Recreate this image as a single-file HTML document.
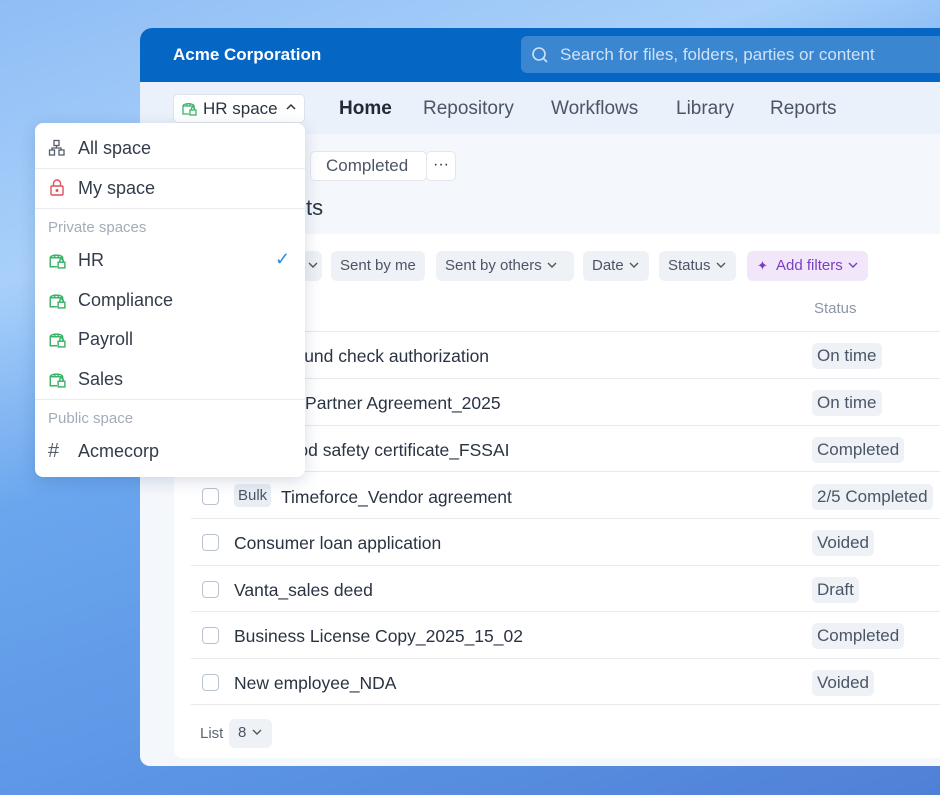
<!DOCTYPE html>
<html><head><meta charset="utf-8"><style>
*{box-sizing:border-box;margin:0;padding:0}
body{width:940px;height:795px;overflow:hidden;position:relative;font-family:"Liberation Sans",sans-serif;color:#2a3342;
background:linear-gradient(160deg,#8fbdf5 0%,#a9d0fa 25%,#6aa6ee 45%,#5e97e6 70%,#4f80d6 100%)}
.a{position:absolute}
.win{left:140px;top:28px;width:820px;height:738px;background:#f4f7fb;border-radius:12px 0 0 10px;overflow:hidden}
.hdr{left:0;top:0;width:100%;height:54px;background:#0566c4}
.title{left:33px;top:17px;color:#fff;font-weight:bold;font-size:17px}
.search{left:381px;top:8px;width:440px;height:37px;background:#3a86d0;border-radius:6px;color:#cfe2f6;font-size:17px;padding:9px 0 0 39px}
.nav{left:0;top:54px;width:100%;height:52px;background:#eaf1fa}
.nv{top:70px;font-size:19px;color:#4a5566}
.card{left:34px;top:206px;width:800px;height:524px;background:#fff;border-radius:8px}
.chip{height:30px;background:#eef1f5;border-radius:6px;font-size:15px;color:#4b5565;padding:6px 9px;top:223px}
.line{left:51px;width:760px;height:1px;background:#e6e9ee}
.row{left:94px;font-size:17.5px;color:#2a3342}
.cb{left:62px;width:17px;height:17px;border:1.5px solid #b9c3d0;border-radius:4px}
.st{left:672px;background:#eef1f5;border-radius:5px;font-size:17px;color:#4b5565;padding:3px 5px}
.dd{left:35px;top:123px;width:270px;height:354px;background:#fff;border-radius:8px;box-shadow:0 4px 16px rgba(30,60,110,.18)}
.di{left:43px;font-size:18px;color:#333c4a}
.ic{left:13px}
.sep{left:0;width:270px;height:1px;background:#e8ebef}
.lab{left:13px;font-size:15px;color:#a3acb8}
</style></head><body>
<div class="a win">
 <div class="a hdr"></div>
 <div class="a title">Acme Corporation</div>
 <div class="a search">Search for files, folders, parties or content</div>
 <svg class="a" style="left:391px;top:18px" width="18" height="18" viewBox="0 0 18 18"><circle cx="8" cy="8" r="6" fill="none" stroke="#cfe2f6" stroke-width="1.6"/><path d="M12.5 12.5L16 16" stroke="#cfe2f6" stroke-width="1.6"/></svg>
 <div class="a nav"></div>
 <div class="a" style="left:33px;top:66px;width:132px;height:29px;background:#fff;border:1px solid #dde3ea;border-radius:5px;font-size:17px;padding:4px 0 0 29px;color:#2a3342">HR space</div>
 <svg class="a" style="left:41px;top:72px" width="16" height="16" viewBox="0 0 16 16"><path d="M8 14H2V6h11v3M2 6c0-3 11-3 11 0M6 3v3M9 3v3" fill="none" stroke="#3bb46a" stroke-width="1.3"/><rect x="9" y="10" width="6" height="5" fill="none" stroke="#3bb46a" stroke-width="1.3"/><path d="M10.5 10V8.5a1.5 1.5 0 0 1 3 0V10" fill="none" stroke="#3bb46a" stroke-width="1.3"/></svg>
 <svg class="a" style="left:145px;top:74px" width="12" height="10"><path d="M2 7l4-4 4 4" fill="none" stroke="#333" stroke-width="1.5"/></svg>
 <div class="a nv" style="left:199px;font-weight:bold;color:#222a36">Home</div>
 <div class="a nv" style="left:283px">Repository</div>
 <div class="a nv" style="left:411px">Workflows</div>
 <div class="a nv" style="left:536px">Library</div>
 <div class="a nv" style="left:630px">Reports</div>
 <div class="a" style="left:170px;top:123px;width:117px;height:30px;background:#fff;border:1px solid #e3e7ed;border-radius:5px;font-size:17px;color:#4b5565;padding:4px 0 0 15px">Completed</div>
 <div class="a" style="left:286px;top:123px;width:30px;height:30px;background:#fff;border:1px solid #e3e7ed;border-radius:5px;font-size:16px;text-align:center;padding-top:4px;color:#333">···</div>
 <div class="a" style="left:166px;top:167px;font-size:22px;color:#2a3342">ts</div>
 <div class="a card"></div>
 <div class="a chip" style="left:140px;width:42px"><svg width="12" height="10" style="margin-left:18px"><path d="M2 3l4 4 4-4" fill="none" stroke="#555" stroke-width="1.4"/></svg></div>
 <div class="a chip" style="left:191px">Sent by me</div>
 <div class="a chip" style="left:296px;width:138px">Sent by others <svg width="12" height="10"><path d="M2 3l4 4 4-4" fill="none" stroke="#555" stroke-width="1.4"/></svg></div>
 <div class="a chip" style="left:443px">Date <svg width="12" height="10"><path d="M2 3l4 4 4-4" fill="none" stroke="#555" stroke-width="1.4"/></svg></div>
 <div class="a chip" style="left:519px">Status <svg width="12" height="10"><path d="M2 3l4 4 4-4" fill="none" stroke="#555" stroke-width="1.4"/></svg></div>
 <div class="a chip" style="left:607px;background:#f2e6fb;color:#7a3fc0;padding-left:29px">Add filters <svg width="12" height="10"><path d="M2 3l4 4 4-4" fill="none" stroke="#7a3fc0" stroke-width="1.4"/></svg></div>
 <div class="a" style="left:617px;top:230px;color:#7a3fc0;font-size:13px">✦</div>
 <div class="a" style="left:674px;top:272px;font-size:15px;color:#8d97a5">Status</div>
 <div class="a line" style="top:303px"></div>
 <div class="a row" style="top:318px;left:100px">Background check authorization</div>
 <div class="a st" style="top:315px">On time</div>
 <div class="a line" style="top:350px"></div>
 <div class="a row" style="top:365px;left:95px">Channel Partner Agreement_2025</div>
 <div class="a st" style="top:362px">On time</div>
 <div class="a line" style="top:397px"></div>
 <div class="a row" style="top:412px;left:138px">Food safety certificate_FSSAI</div>
 <div class="a st" style="top:409px">Completed</div>
 <div class="a line" style="top:443px"></div>
 <div class="a cb" style="top:460px"></div>
 <div class="a" style="left:94px;top:456px;background:#e9eef5;border-radius:4px;font-size:15px;color:#4b5565;padding:3px 4px">Bulk</div>
 <div class="a row" style="top:459px;left:141px">Timeforce_Vendor agreement</div>
 <div class="a st" style="top:456px">2/5 Completed</div>
 <div class="a line" style="top:490px"></div>
 <div class="a cb" style="top:506px"></div>
 <div class="a row" style="top:505px">Consumer loan application</div>
 <div class="a st" style="top:502px">Voided</div>
 <div class="a line" style="top:537px"></div>
 <div class="a cb" style="top:553px"></div>
 <div class="a row" style="top:552px">Vanta_sales deed</div>
 <div class="a st" style="top:549px">Draft</div>
 <div class="a line" style="top:583px"></div>
 <div class="a cb" style="top:599px"></div>
 <div class="a row" style="top:598px">Business License Copy_2025_15_02</div>
 <div class="a st" style="top:595px">Completed</div>
 <div class="a line" style="top:630px"></div>
 <div class="a cb" style="top:646px"></div>
 <div class="a row" style="top:645px">New employee_NDA</div>
 <div class="a st" style="top:642px">Voided</div>
 <div class="a line" style="top:676px"></div>
 <div class="a" style="left:60px;top:697px;font-size:15px;color:#5b6574">List</div>
 <div class="a" style="left:89px;top:691px;width:43px;height:29px;background:#eef1f5;border-radius:6px;font-size:15px;color:#4b5565;padding:5px 0 0 9px">8 <svg width="12" height="10"><path d="M2 3l4 4 4-4" fill="none" stroke="#555" stroke-width="1.4"/></svg></div>
</div>
<div class="a dd">
 <svg class="a ic" style="top:16px" width="18" height="18" viewBox="0 0 18 18" fill="none" stroke="#555e6c" stroke-width="1.3"><rect x="6" y="1.5" width="5" height="5"/><rect x="1.5" y="11" width="5" height="5"/><rect x="11" y="11" width="5" height="5"/><path d="M8.5 6.5v2.5M4 11V9h9v2"/></svg>
 <div class="a di" style="top:15px">All space</div>
 <div class="a sep" style="top:45px"></div>
 <svg class="a ic" style="top:55px" width="18" height="18" viewBox="0 0 18 18" fill="none" stroke="#e0505f" stroke-width="1.4"><rect x="3" y="8" width="12" height="9" rx="1"/><path d="M5.5 8V5.5a3.5 3.5 0 0 1 7 0V8"/><circle cx="9" cy="12.5" r=".8" fill="#e0505f"/></svg>
 <div class="a di" style="top:55px">My space</div>
 <div class="a sep" style="top:85px"></div>
 <div class="a lab" style="top:96px">Private spaces</div>
 <svg class="a ic" style="top:128px" width="18" height="18" viewBox="0 0 16 16"><path d="M8 14H2V6h11v3M2 6c0-3 11-3 11 0M6 3v3M9 3v3" fill="none" stroke="#3bb46a" stroke-width="1.3"/><rect x="9" y="10" width="6" height="5" fill="none" stroke="#3bb46a" stroke-width="1.3"/><path d="M10.5 10V8.5a1.5 1.5 0 0 1 3 0V10" fill="none" stroke="#3bb46a" stroke-width="1.3"/></svg>
 <div class="a di" style="top:127px">HR</div>
 <div class="a" style="left:240px;top:126px;color:#2e8be0;font-size:18px">✓</div>
 <svg class="a ic" style="top:168px" width="18" height="18" viewBox="0 0 16 16"><path d="M8 14H2V6h11v3M2 6c0-3 11-3 11 0M6 3v3M9 3v3" fill="none" stroke="#3bb46a" stroke-width="1.3"/><rect x="9" y="10" width="6" height="5" fill="none" stroke="#3bb46a" stroke-width="1.3"/><path d="M10.5 10V8.5a1.5 1.5 0 0 1 3 0V10" fill="none" stroke="#3bb46a" stroke-width="1.3"/></svg>
 <div class="a di" style="top:167px">Compliance</div>
 <svg class="a ic" style="top:207px" width="18" height="18" viewBox="0 0 16 16"><path d="M8 14H2V6h11v3M2 6c0-3 11-3 11 0M6 3v3M9 3v3" fill="none" stroke="#3bb46a" stroke-width="1.3"/><rect x="9" y="10" width="6" height="5" fill="none" stroke="#3bb46a" stroke-width="1.3"/><path d="M10.5 10V8.5a1.5 1.5 0 0 1 3 0V10" fill="none" stroke="#3bb46a" stroke-width="1.3"/></svg>
 <div class="a di" style="top:206px">Payroll</div>
 <svg class="a ic" style="top:247px" width="18" height="18" viewBox="0 0 16 16"><path d="M8 14H2V6h11v3M2 6c0-3 11-3 11 0M6 3v3M9 3v3" fill="none" stroke="#3bb46a" stroke-width="1.3"/><rect x="9" y="10" width="6" height="5" fill="none" stroke="#3bb46a" stroke-width="1.3"/><path d="M10.5 10V8.5a1.5 1.5 0 0 1 3 0V10" fill="none" stroke="#3bb46a" stroke-width="1.3"/></svg>
 <div class="a di" style="top:246px">Sales</div>
 <div class="a sep" style="top:276px"></div>
 <div class="a lab" style="top:287px">Public space</div>
 <div class="a" style="left:13px;top:317px;font-size:20px;color:#555e6c">#</div>
 <div class="a di" style="top:318px">Acmecorp</div>
</div>
</body></html>
